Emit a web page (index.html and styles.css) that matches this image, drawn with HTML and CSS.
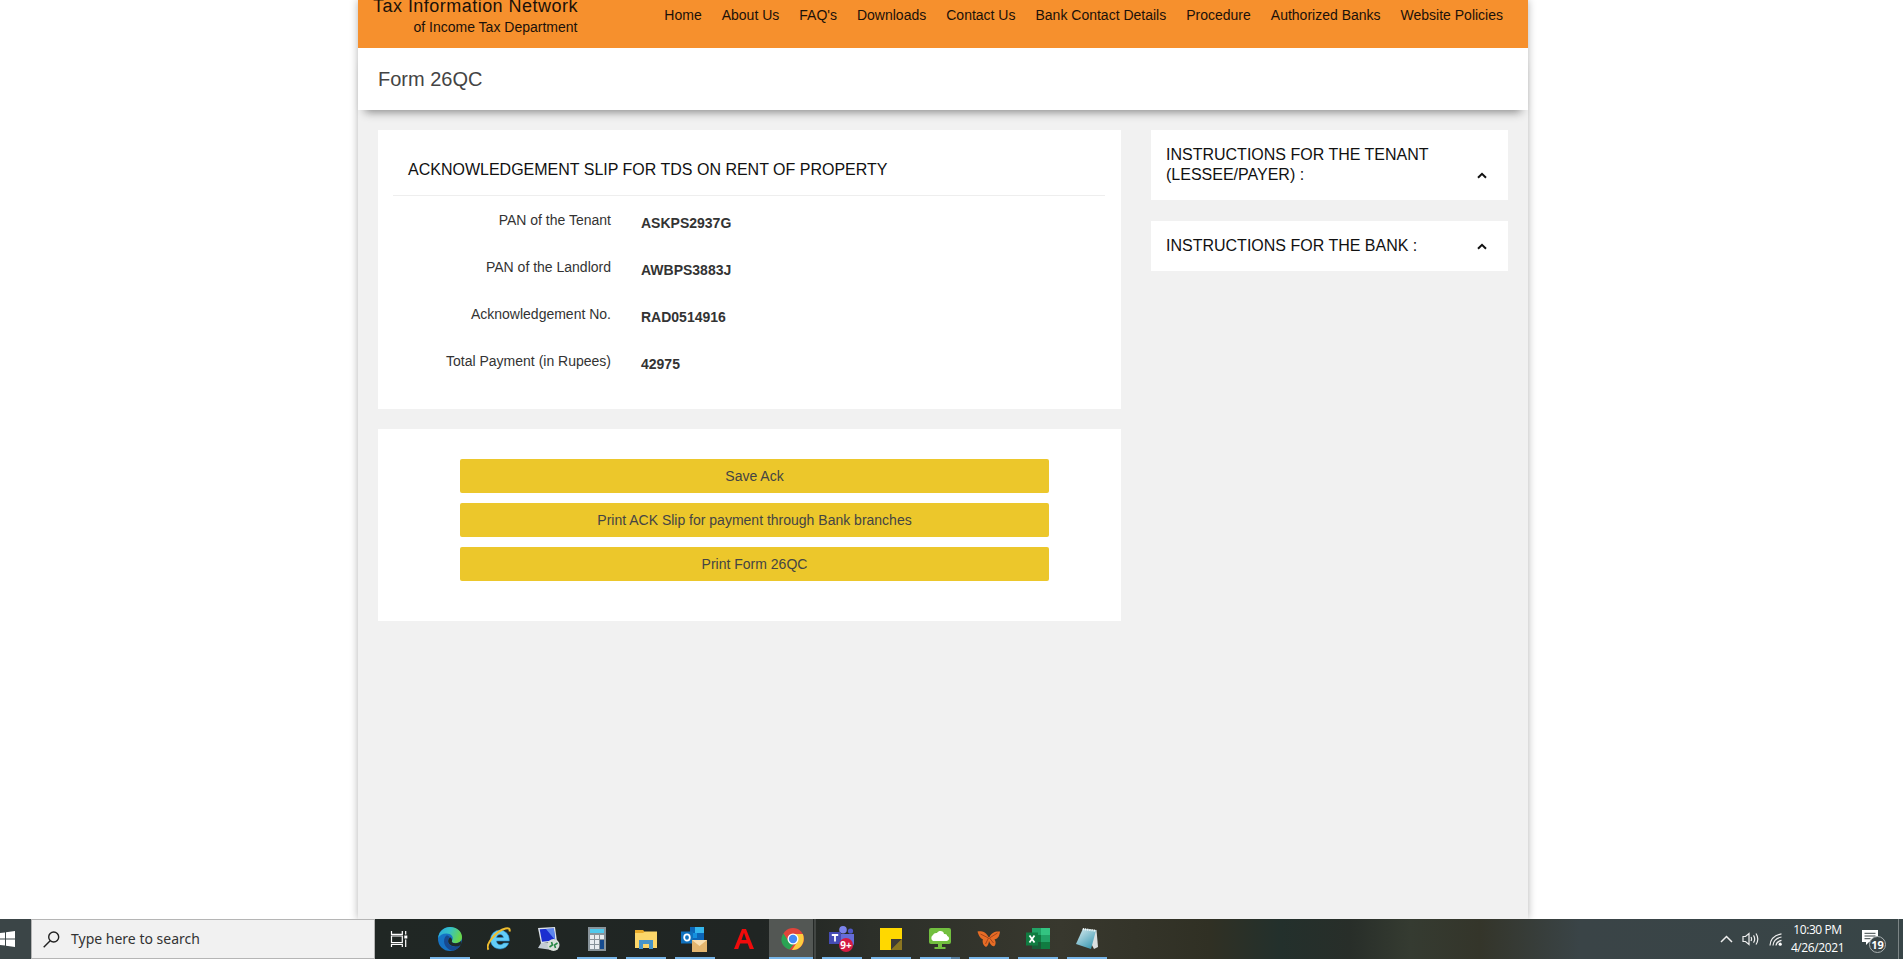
FILE: index.html
```html
<!DOCTYPE html>
<html lang="en">
<head>
<meta charset="utf-8">
<title>Form 26QC</title>
<link rel="stylesheet" href="styles.css">
</head>
<body>
<main class="viewport">
  <div class="page">
    <header class="banner">
      <div class="brand">
        <div class="brand-title">Tax Information Network</div>
        <div class="brand-sub">of Income Tax Department</div>
      </div>
      <nav class="nav">
        <a>Home</a><a>About Us</a><a>FAQ's</a><a>Downloads</a><a>Contact Us</a><a>Bank Contact Details</a><a>Procedure</a><a>Authorized Banks</a><a>Website Policies</a>
      </nav>
    </header>
    <div class="title-bar"><h1>Form 26QC</h1></div>
    <div class="content">
      <section class="main-col">
        <div class="card slip">
          <h2>ACKNOWLEDGEMENT SLIP FOR TDS ON RENT OF PROPERTY</h2>
          <dl class="fields">
            <dt>PAN of the Tenant</dt><dd>ASKPS2937G</dd>
            <dt>PAN of the Landlord</dt><dd>AWBPS3883J</dd>
            <dt>Acknowledgement No.</dt><dd>RAD0514916</dd>
            <dt>Total Payment (in Rupees)</dt><dd>42975</dd>
          </dl>
        </div>
        <div class="card actions">
          <button>Save Ack</button>
          <button>Print ACK Slip for payment through Bank branches</button>
          <button>Print Form 26QC</button>
        </div>
      </section>
      <aside class="side-col">
        <div class="card note"><span>INSTRUCTIONS FOR THE TENANT (LESSEE/PAYER) :</span><svg class="caret" viewBox="0 0 10 7"><path d="M1 5.8 5 1.8 9 5.8"/></svg></div>
        <div class="card note"><span>INSTRUCTIONS FOR THE BANK :</span><svg class="caret" viewBox="0 0 10 7"><path d="M1 5.8 5 1.8 9 5.8"/></svg></div>
      </aside>
    </div>
  </div>
</main>
<footer class="taskbar">
  <div class="start"><svg width="15" height="16" viewBox="0 0 15 16" fill="#fff"><path d="M0 2.1 5 1.4V7.4H0zM6 1.2 15 0V7.4H6zM0 8.4H5V14.6L0 13.9zM6 8.4H15V16L6 14.8z"/></svg></div>
  <div class="search">
    <svg width="17" height="17" viewBox="0 0 17 17" fill="none" stroke="#222" stroke-width="1.4"><circle cx="10.7" cy="6" r="5"/><path d="M7.2 9.7.7 16.2"/></svg>
    <span>Type here to search</span>
  </div>
  <div class="apps">
    <div class="app task-view"><svg viewBox="0 0 24 24" fill="none" stroke="#fff" stroke-width="1.2"><path d="M4.500 4v3.300h10.800V4M4.500 20v-2.700h10.800V20M4.500 9h10.800v6.500H4.500zM18.700 4v3.500M18.700 12.500V20"/><path d="M17.300 8.500h3v3h-3z" fill="#fff" stroke="none"/></svg></div>
    <div class="app open"><svg viewBox="0 0 24 24"><defs><linearGradient id="eg" x1="0" y1="0" x2="1" y2=".3"><stop offset="0" stop-color="#2aa8df"/><stop offset=".5" stop-color="#35c1c7"/><stop offset="1" stop-color="#68d64c"/></linearGradient></defs><circle cx="12" cy="12" r="12" fill="#1673c4"/><path d="M.2 11C1 4 6 0 12 0c7 0 12 4.800 12 10 0 4-3 6.200-6.500 6.200-3 0-4.300-1.200-3.600-2.300C16.500 10 13 6.500 8.500 6.500 4.500 6.500 1.500 8.500.2 11z" fill="url(#eg)"/><path d="M8.500 8.500C4 12 5.500 22 14.500 23.700c3.500-.5 6.500-2.500 8-5.400-5 2.500-12.500 1.200-12.500-4.300 0-2 1-3.200 2-3.800-1-1.200-2-1.700-3.500-1.700z" fill="#174a91"/><path d="M14 13.800c-.8 1.300.8 2.500 3.500 2.500 2.500 0 4.500-1 5.700-2.700.3 1.600.2 3.200-.6 4.700-5 2.500-12 1-12.500-4 0-2 1-3.300 2.100-4 1.500 1 2 2.500 1.800 3.500z" fill="#20292a"/></svg></div>
    <div class="app"><svg viewBox="0 0 24 24"><path d="M3.500 12.500a9.400 9.400 0 0 1 18.800 0v1.500H9.500c.2 4.200 5.500 4.700 7 2h5.100C19.300 24.800 3.500 24 3.500 12.500zm6.100-2h6.800c-.5-4-6.100-4-6.800 0z" fill="#63cdf7" stroke="#2388cc" stroke-width=".6"/><path d="M1.600 22.600C-2.500 18 9 4 18.500 1.500c3-.8 4.800.2 4 3" fill="none" stroke="#f0bd2e" stroke-width="2"/></svg></div>
    <div class="app"><svg viewBox="0 0 24 24"><path d="M2 1 19 0l2 14.500-16 1.700z" fill="#dde3e8"/><path d="M3.700 2.300 17.800 1.500l1.500 11.700L6 14.700z" fill="#1b2ed0"/><path d="M10 2 17.800 1.500l1.500 11.700z" fill="#5c86ef"/><path d="m5 16-3 5 14 2v-7z" fill="#c3cbd3"/><circle cx="17.500" cy="18" r="6" fill="#d9dfd9"/><path d="m13.500 20 3-2-1-3M21.500 16l-3 2 1 3" fill="none" stroke="#278744" stroke-width="1.600"/></svg></div>
    <div class="app open"><svg viewBox="0 0 24 24"><path d="M3 0h18v24H3z" fill="#88939a"/><path d="M5 2h14v4H5z" fill="#4fc9ed"/><path d="M5 8h4v4H5zm5 0h4v4h-4zm5 0h4v4h-4zM5 13h4v4H5zm5 0h4v4h-4zM5 18h4v4H5zm5 0h4v4h-4z" fill="#e9edf0"/><path d="M15 13h4v9h-4z" fill="#164b8f"/></svg></div>
    <div class="app open"><svg viewBox="0 0 24 24"><path d="M1 3h8l2 2h12v16H1z" fill="#e9aa29"/><path d="M1 6h8l2-1.500h12V21H1z" fill="#fcd66a"/><path d="M5 22V13h14v9h-4v-5H9v5z" fill="#4694ca"/></svg></div>
    <div class="app open"><svg class="wide" viewBox="0 0 27 26"><path d="M9 1h14v16H9z" fill="#0c66b8"/><path d="M14 1h9v6h-9z" fill="#35b7ee"/><path d="M9 7h7v5H9z" fill="#1490df"/><path d="M0 5.500h12v12H0z" fill="#1071bd"/><ellipse cx="6" cy="11.500" rx="2.800" ry="3.200" fill="none" stroke="#fff" stroke-width="1.800"/><path d="M11 14h15v12H11z" fill="#e4b66f"/><path d="m11 14 7.500 6L26 14z" fill="#fae0b2"/></svg></div>
    <div class="app"><svg viewBox="0 0 24 24"><path d="M2 22 10 2h4l8 20h-4.300l-2-5.500H8.200l-2 5.500zM9.500 13h5L12 5.800z" fill="#f00b0b" fill-rule="evenodd"/></svg></div>
    <div class="app open active"><svg viewBox="0 0 24 24"><circle cx="12" cy="12" r="11" fill="#e1443b"/><path d="M2.500 6.500 8 15l5 2-4.500 5.500C-1 19-.8 11 2.500 6.500z" fill="#2aa353"/><path d="M12 7h9.800C25 15 19.500 23.500 11 23l5.500-8.500z" fill="#fccd3f"/><circle cx="12" cy="12" r="5.500" fill="#fff"/><circle cx="12" cy="12" r="4.200" fill="#4389f5"/></svg></div>
    <div class="app open"><svg class="wide" viewBox="0 0 27 26"><circle cx="15" cy="3.800" r="3.800" fill="#7b83eb"/><circle cx="22.500" cy="5" r="2.600" fill="#5059c9"/><path d="M9 8h17v9c0 6-13 9-15 0z" fill="#656dd8"/><path d="M1 6h12v12H1z" fill="#444bb5"/><path d="M3.800 9h6.400M7 9v6.500" stroke="#fff" stroke-width="1.800"/><circle cx="18" cy="19" r="7" fill="#d41b43"/><text x="18" y="22.700" class="badge-text">9+</text></svg></div>
    <div class="app open"><svg viewBox="0 0 24 24"><path d="M1 1h22v11L12 23H1z" fill="#ffd800"/><path d="M12 23V12h11z" fill="#3f3b35"/><path d="M23 12v11H12z" fill="#8a7521"/></svg></div>
    <div class="app open paired"><svg viewBox="0 0 24 24"><rect x="1" y="1" width="22" height="16" rx="2" fill="#72bf3f"/><path d="M5 14a3.500 3.500 0 0 1 0-6C6 6 8 6 9 6c2-3.500 7-2 7 1 2-.4 3 .5 3.200 2 3 1 2 5-.7 5z" fill="#fff"/><path d="M10 17h4v3h3.500v2h-11v-2H10z" fill="#72bf3f"/></svg></div>
    <div class="app open"><svg viewBox="0 0 24 24"><path d="M11.500 10C8 4 4 4 .5 4.500c1 3 2 6.500 5.500 8-1 2 0 6 3 7.500 2-1 2.800-4 3-6 1 3 3 6 5.500 5 1.500-2 1.500-4.500 0-6.500 4-1 5-4 5.500-8C18 4 14 6 12.500 10z" fill="#e76c25"/><path d="m11.500 11-8-4m8 4-3 6m4-6 8-5m-8 5 4 5" fill="none" stroke="#8b3519" stroke-width=".7"/></svg></div>
    <div class="app open"><svg viewBox="0 0 24 24"><path d="M6 1h9v7H6z" fill="#21a366"/><path d="M15 1h9v7h-9z" fill="#33c481"/><path d="M6 8h9v7H6z" fill="#107c41"/><path d="M15 8h9v7h-9z" fill="#21a366"/><path d="M6 15h18v7H6z" fill="#185c37"/><path d="M15 15h9v7h-9z" fill="#107c41"/><path d="M0 5.500h12v13H0z" fill="#107c41"/><path d="m3.500 8.500 5 7m0-7-5 7" stroke="#fff" stroke-width="1.800"/></svg></div>
    <div class="app open"><svg viewBox="0 0 24 24"><defs><linearGradient id="nb" x1="0" y1="0" x2=".7" y2="1"><stop offset="0" stop-color="#dceef1"/><stop offset="1" stop-color="#3f9bb4"/></linearGradient></defs><path d="m8.500 2 13 1L23 20l-4 2z" fill="#d9dfe0"/><path d="m8 1.500 13 2L16 22 1 17z" fill="url(#nb)"/><path d="M7.800 2 21 3.800" stroke="#f7faf9" stroke-width="2" stroke-dasharray="1.200 1"/></svg></div>
  </div>
  <div class="tray">
    <svg class="up" width="13" height="8" viewBox="0 0 13 8"><path d="m1 7 5.500-5.500L12 7"/></svg>
    <svg class="vol" width="17" height="14" viewBox="0 0 17 14"><path d="M1 4.500h2.500L7 1.500v11L3.500 9.500H1zM9 5q1.200 2 0 4M11.500 3.300q2.400 3.700 0 7.400M14 1.500q3.600 5.500 0 11"/></svg>
    <svg class="wifi" width="13" height="13" viewBox="0 0 13 13"><path d="M1 12.500Q1.500 3 12.500.8M4 12.500Q4.500 5.500 12.500 4M7 12.500Q7.500 8.500 12.500 7.300"/><circle cx="11.200" cy="11.200" r="1.600"/></svg>
    <div class="clock"><span>10:30 PM</span><span>4/26/2021</span></div>
    <svg class="action" width="27" height="24" viewBox="0 0 27 24"><path d="M1 1h16v12H8l-3 3v-3H1z" fill="#fff"/><path d="M3.500 4.300h11M3.500 7h11M3.500 9.700h6" stroke="#3a4547"/><circle cx="16.500" cy="15.500" r="8" fill="#3a4547" stroke="#aab1b2"/><text x="16.500" y="19.500" class="count">19</text></svg>
  </div>
</footer>
</body>
</html>
```
FILE: styles.css
```css
* { box-sizing: border-box; }
body { margin: 0; height: 959px; overflow: hidden; display: flex; flex-direction: column; background: #fff; color: #333; font: 14px/20px "Liberation Sans", Arial, sans-serif; }
.viewport { height: 919px; display: flex; justify-content: center; overflow: hidden; padding-right: 17px; }
.page { width: 1170px; background: #f1f1f1; box-shadow: 0 0 8px rgba(0, 0, 0, .3); }
.banner { height: 48px; background: #f6902d; display: flex; justify-content: space-between; padding: 0 25px 0 15px; color: #1b1109; }
.brand { text-align: right; margin-top: -4px; }
.brand-title { font-size: 18px; line-height: 21px; height: 21px; letter-spacing: .47px; margin-right: -.47px; }
.brand-sub { line-height: 20px; }
.nav { display: flex; gap: 20px; padding-top: 5px; white-space: nowrap; }
.title-bar { height: 62px; background: #fff; padding: 20px; box-shadow: 0 9px 9px -7px rgba(0, 0, 0, .45); }
h1 { margin: 0; font-size: 20px; line-height: 22px; font-weight: 400; color: #444; }
.content { display: flex; gap: 30px; padding: 20px; align-items: flex-start; }
.main-col { width: 743px; display: grid; gap: 20px; }
.side-col { width: 357px; display: grid; gap: 21px; }
.card { background: #fff; }
.slip { height: 279px; padding: 15px 16px 15px 15px; }
h2 { margin: 0; height: 51px; padding: 15px 15px 0; border-bottom: 1px solid #eee; color: #111; font-size: 16px; line-height: 20px; font-weight: 400; }
.fields { margin: 14px 0 0; display: grid; grid-template-columns: 218px 1fr; column-gap: 30px; grid-auto-rows: 47px; }
dt { text-align: right; }
dd { margin: 0; padding-top: 3px; font-weight: 700; }
.actions { height: 192px; padding: 30px 72px 0 82px; display: flex; flex-direction: column; gap: 10px; }
button { height: 34px; border: 0; border-radius: 2px; background: #ecc72b; color: #444; font: 14px/20px "Liberation Sans", Arial, sans-serif; padding: 0; }
.note { display: flex; justify-content: space-between; align-items: flex-end; padding: 15px 21px 15px 15px; color: #111; font-size: 16px; line-height: 20px; }
.note span { width: 280px; }
.caret { width: 10px; height: 7px; margin-bottom: 6px; fill: none; stroke: #111; stroke-width: 2; }
.taskbar { height: 40px; display: flex; background: linear-gradient(90deg, #3b4547 0, #3b4547 30px, #202724 375px, #202523 760px, #2c2f29 870px, #38382e 1060px, #303024 1210px, #23302c 1280px, #282e29 1350px, #353b31 1410px, #34352a 1480px, #3a4447 1580px, #384547 1903px); }
.start { width: 31px; display: flex; align-items: center; }
.search { width: 344px; background: #f1f1f1; border: 1px solid #b5b5b5; display: flex; align-items: center; gap: 11px; padding-left: 11px; color: #333; font: 14px/20px "Noto Sans", "Open Sans", sans-serif; }
.apps { display: flex; flex: 1; }
.app { width: 49px; height: 40px; display: flex; align-items: center; justify-content: center; position: relative; padding-left: 2px; }
.task-view { padding: 0 2px 0 0; }
.app svg { width: 24px; height: 24px; flex: none; }
.app .wide { width: 27px; height: 26px; }
.open::after { content: ""; position: absolute; bottom: 0; left: 6px; width: 40px; height: 2px; background: #77b5e8; }
.active { background: linear-gradient(90deg, transparent 0 2px, #535754 2px 46px, #252927 46px 47px, #424643 47px); }
.active::after { left: 2px; width: 44px; }
.paired::after { background: linear-gradient(90deg, #77b5e8 31px, #567d9e 31px); }
.badge-text { font: 700 10px "Noto Sans", sans-serif; fill: #fff; text-anchor: middle; }
.tray { width: 193px; display: flex; align-items: center; color: #fff; border-right: 1px solid #7c8586; margin-right: 4px; }
.tray svg { flex: none; }
.up, .vol, .wifi { fill: none; stroke: #eee; stroke-width: 1.2; }
.up { margin-left: 14px; stroke-width: 1.5; }
.vol { margin-left: 9px; }
.wifi { margin-left: 10px; }
.wifi circle { fill: #fff; stroke: none; }
.clock { width: 53px; margin-left: 9px; display: flex; flex-direction: column; align-items: center; font: 12px/18px "Open Sans", sans-serif; letter-spacing: -.4px; white-space: nowrap; }
.action { margin: 4px 0 0 17px; }
.count { font: 700 11px "Open Sans", sans-serif; fill: #fff; text-anchor: middle; }
```
